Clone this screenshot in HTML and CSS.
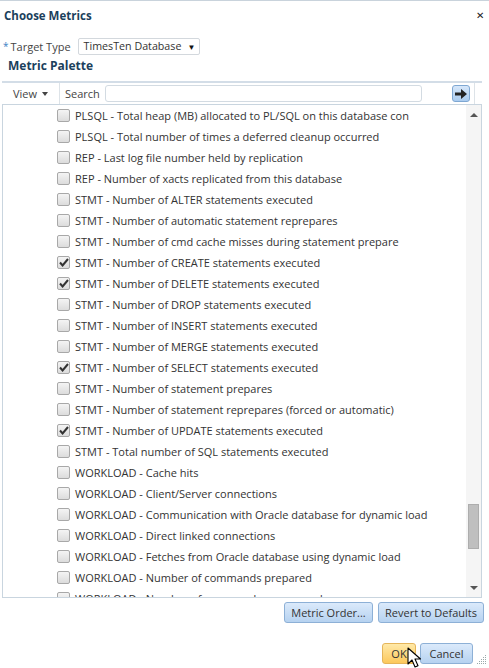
FILE: index.html
```html
<!DOCTYPE html>
<html>
<head>
<meta charset="utf-8">
<link rel="stylesheet" href="styles.css">
</head>
<body>
<div class="dialog">
  <div class="header">
    <span class="title">Choose Metrics</span>
    <span class="close">&#x2715;</span>
  </div>
  <div class="target">
    <span class="req">*</span><span class="label">Target Type</span>
    <span class="select">TimesTen Database <span class="tri">&#9660;</span></span>
  </div>
  <div class="palette">Metric Palette</div>
  <div class="panel">
    <div class="toolbar">
      <span class="view">View <span class="caret"></span></span>
      <span class="sep"></span>
      <span class="search-label">Search</span>
      <span class="search-input"></span>
      <span class="go"><svg width="12" height="10" viewBox="0 0 12 10"><path d="M0 3.5h6V0l6 5-6 5V6.5H0z" fill="#222"/></svg></span>
      <span class="sep2"></span>
    </div>
    <div class="listbox">
      <div class="items">
        <div class="row"><span class="cb"></span>PLSQL - Total heap (MB) allocated to PL/SQL on this database con</div>
        <div class="row"><span class="cb"></span>PLSQL - Total number of times a deferred cleanup occurred</div>
        <div class="row"><span class="cb"></span>REP - Last log file number held by replication</div>
        <div class="row"><span class="cb"></span>REP - Number of xacts replicated from this database</div>
        <div class="row"><span class="cb"></span>STMT - Number of ALTER statements executed</div>
        <div class="row"><span class="cb"></span>STMT - Number of automatic statement reprepares</div>
        <div class="row"><span class="cb"></span>STMT - Number of cmd cache misses during statement prepare</div>
        <div class="row"><span class="cb on"><svg width="10" height="9" viewBox="0 0 10 9"><path d="M1 4.5l2.6 3L9 1" stroke="#333" stroke-width="2" fill="none"/></svg></span>STMT - Number of CREATE statements executed</div>
        <div class="row"><span class="cb on"><svg width="10" height="9" viewBox="0 0 10 9"><path d="M1 4.5l2.6 3L9 1" stroke="#333" stroke-width="2" fill="none"/></svg></span>STMT - Number of DELETE statements executed</div>
        <div class="row"><span class="cb"></span>STMT - Number of DROP statements executed</div>
        <div class="row"><span class="cb"></span>STMT - Number of INSERT statements executed</div>
        <div class="row"><span class="cb"></span>STMT - Number of MERGE statements executed</div>
        <div class="row"><span class="cb on"><svg width="10" height="9" viewBox="0 0 10 9"><path d="M1 4.5l2.6 3L9 1" stroke="#333" stroke-width="2" fill="none"/></svg></span>STMT - Number of SELECT statements executed</div>
        <div class="row"><span class="cb"></span>STMT - Number of statement prepares</div>
        <div class="row"><span class="cb"></span>STMT - Number of statement reprepares (forced or automatic)</div>
        <div class="row"><span class="cb on"><svg width="10" height="9" viewBox="0 0 10 9"><path d="M1 4.5l2.6 3L9 1" stroke="#333" stroke-width="2" fill="none"/></svg></span>STMT - Number of UPDATE statements executed</div>
        <div class="row"><span class="cb"></span>STMT - Total number of SQL statements executed</div>
        <div class="row"><span class="cb"></span>WORKLOAD - Cache hits</div>
        <div class="row"><span class="cb"></span>WORKLOAD - Client/Server connections</div>
        <div class="row"><span class="cb"></span>WORKLOAD - Communication with Oracle database for dynamic load</div>
        <div class="row"><span class="cb"></span>WORKLOAD - Direct linked connections</div>
        <div class="row"><span class="cb"></span>WORKLOAD - Fetches from Oracle database using dynamic load</div>
        <div class="row"><span class="cb"></span>WORKLOAD - Number of commands prepared</div>
        <div class="row"><span class="cb"></span>WORKLOAD - Number of commands reprepared</div>
      </div>
      <div class="scrollbar">
        <span class="arrow-up"></span>
        <span class="track"><span class="thumb"></span></span>
        <span class="arrow-down"></span>
      </div>
    </div>
  </div>
  <div class="actions">
    <span class="btn b-order">Metric Order...</span>
    <span class="btn b-revert">Revert to Defaults</span>
  </div>
  <div class="footer">
    <span class="btn ok">OK</span>
    <span class="btn cancel">Cancel</span>
    <span class="grip"><svg width="10" height="10" viewBox="0 0 10 10" fill="#9aa">
      <rect x="8" y="0" width="1" height="1"/><rect x="6" y="2" width="1" height="1"/><rect x="8" y="2" width="1" height="1"/>
      <rect x="4" y="4" width="1" height="1"/><rect x="6" y="4" width="1" height="1"/><rect x="8" y="4" width="1" height="1"/>
      <rect x="2" y="6" width="1" height="1"/><rect x="4" y="6" width="1" height="1"/><rect x="6" y="6" width="1" height="1"/><rect x="8" y="6" width="1" height="1"/>
      <rect x="0" y="8" width="1" height="1"/><rect x="2" y="8" width="1" height="1"/><rect x="4" y="8" width="1" height="1"/><rect x="6" y="8" width="1" height="1"/><rect x="8" y="8" width="1" height="1"/>
    </svg></span>
    <span class="cursor"><svg width="14" height="21" viewBox="0 0 14 21"><path d="M1 1v16l4-4 3 7 3-1.3-3-6.7h5.5z" fill="#fff" stroke="#000" stroke-width="1.1" stroke-linejoin="round"/></svg></span>
  </div>
</div>
</body>
</html>
```

FILE: styles.css
```css
* { box-sizing: border-box; }
html, body { margin: 0; padding: 0; background: #fff; }
body {
  width: 489px;
  height: 668px;
  overflow: hidden;
  font-family: "Open Sans", "Noto Sans", sans-serif;
  font-size: 11px;
  color: #333;
}
.dialog {
  width: 489px;
  height: 668px;
  border-top: 1px solid #c9d3dc;
  position: relative;
}
.header {
  display: flex;
  justify-content: space-between;
  align-items: center;
  height: 28px;
  padding: 0 5px 0 4px;
}
.title {
  font-weight: bold;
  font-size: 11.5px;
  color: #1b3f5c;
}
.close {
  font-size: 10px;
  color: #222;
}
.target {
  display: flex;
  align-items: center;
  height: 18px;
  margin-top: 8px;
  padding-left: 3px;
}
.req { color: #3b82c4; font-size: 10px; margin-right: 2px; }
.label { color: #444; margin-right: 7px; }
.select {
  display: inline-flex;
  align-items: center;
  height: 17px;
  padding: 0 4px 0 5px;
  border: 1px solid #d3d8dd;
  border-radius: 2px;
  color: #333;
  font-size: 10.7px;
}
.tri { font-size: 8px; margin-left: 6px; color: #111; }
.palette {
  font-weight: bold;
  font-size: 12px;
  color: #1b3f5c;
  padding-left: 8px;
  margin-top: 1px;
  height: 20px;
  line-height: 20px;
}
.panel {
  margin: 5px 7px 0 2px;
}
.toolbar {
  display: flex;
  align-items: center;
  height: 23px;
  border-top: 2px solid #d3dde7;
}
.view { padding-left: 11px; width: 57px; display: inline-flex; align-items: center; color: #444; }
.caret {
  display: inline-block;
  width: 0; height: 0;
  border-left: 3.5px solid transparent;
  border-right: 3.5px solid transparent;
  border-top: 4px solid #444;
  margin-left: 5px;
  margin-top: 1px;
}
.sep { width: 1px; align-self: stretch; background: #dde3e8; }
.search-label { padding-left: 5px; width: 45px; color: #444; }
.search-input {
  width: 317px;
  height: 17px;
  border: 1px solid #d3dbe2;
  border-radius: 3px;
}
.go {
  margin-left: 30px;
  width: 18px;
  height: 17px;
  border: 1px solid #7ea7d2;
  border-radius: 3px;
  background: linear-gradient(#d6e7fa, #a9cbef);
  display: inline-flex;
  align-items: center;
  justify-content: center;
}
.sep2 { width: 1px; align-self: stretch; background: #dde3e8; margin-left: 4px; }
.listbox {
  display: flex;
  height: 494px;
  border: 1px solid #c9d5df;
  overflow: hidden;
}
.items {
  flex: 1;
  padding-left: 54px;
  overflow: hidden;
}
.row {
  display: flex;
  align-items: center;
  height: 21px;
  white-space: nowrap;
  color: #333;
}
.cb {
  width: 13px;
  height: 13px;
  border: 1px solid #a8a8a8;
  border-radius: 2px;
  background: linear-gradient(#f4f4f4, #dcdcdc);
  margin-right: 5px;
  flex: none;
  display: inline-flex;
  align-items: center;
  justify-content: center;
}
.scrollbar {
  width: 15px;
  background: #f5f5f5;
  display: flex;
  flex-direction: column;
  align-items: center;
}
.arrow-up, .arrow-down {
  display: block;
  width: 0; height: 0;
  border-left: 4px solid transparent;
  border-right: 4px solid transparent;
  flex: none;
}
.arrow-up { border-bottom: 4px solid #555; margin-top: 8px; }
.arrow-down { border-top: 4px solid #555; margin-bottom: 7px; }
.track { flex: 1; width: 100%; position: relative; }
.thumb {
  position: absolute;
  left: 2px;
  width: 11px;
  top: 387px;
  height: 45px;
  background: #bfbfbf;
  border: 1px solid #adadad;
}
.actions {
  display: flex;
  justify-content: flex-end;
  gap: 5px;
  padding-right: 5px;
  margin-top: 4px;
}
.btn {
  display: inline-flex;
  align-items: center;
  justify-content: center;
  height: 21px;
  padding: 0;
  border: 1px solid #8db0d6;
  border-radius: 3px;
  background: linear-gradient(#dbeafb, #b6d2f0);
  color: #333;
  font-size: 11px;
  white-space: nowrap;
}
.b-order { width: 89px; }
.b-revert { width: 106px; }
.footer {
  display: flex;
  justify-content: flex-end;
  align-items: center;
  gap: 4px;
  margin-top: 20px;
  padding-right: 16px;
  position: relative;
}
.ok {
  width: 34px;
  background: linear-gradient(#ffe9a8, #fcc85c);
  border-color: #e5b55a;
}
.cancel { width: 53px; }
.grip { position: absolute; right: 2px; top: 12px; line-height: 0; }
.cursor { position: absolute; left: 407px; top: 4px; line-height: 0; }
```
